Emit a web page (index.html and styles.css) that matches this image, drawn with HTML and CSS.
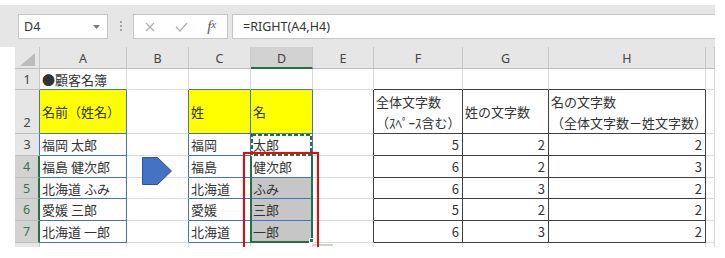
FILE: index.html
```html
<!DOCTYPE html>
<html lang="ja">
<head>
    <meta charset="UTF-8">
    <meta name="viewport" content="width=device-width, initial-scale=1.0">
    <title>顧客名簿</title>
    <link rel="stylesheet" href="styles.css">
</head>
<body>

    <!-- Formula bar -->
    <div class="toolbar">
        <div class="name-box">
            <span>D4</span>
            <svg class="drop" width="7" height="4" viewBox="0 0 7 4"><path d="M0 0h7L3.5 4z"/></svg>
        </div>
        <div class="grip"><i></i><i></i><i></i></div>
        <div class="fx-box">
            <span class="slot">
                <svg width="10" height="10" viewBox="0 0 10 10"><path d="M1 1l8 8M9 1l-8 8"/></svg>
            </span>
            <span class="slot">
                <svg width="13" height="10" viewBox="0 0 13 10"><path d="M1 5l4 4 7-8"/></svg>
            </span>
            <span class="slot fx">f<small>x</small></span>
        </div>
        <div class="formula">=RIGHT(A4,H4)</div>
    </div>

    <!-- Sheet -->
    <div class="sheet">
        <!-- header row -->
        <div class="corner">
            <svg width="15" height="13" viewBox="0 0 15 13"><path d="M15 0v13H0z"/></svg>
        </div>
        <div class="ch">A</div>
        <div class="ch">B</div>
        <div class="ch">C</div>
        <div class="ch on">D</div>
        <div class="ch">E</div>
        <div class="ch">F</div>
        <div class="ch">G</div>
        <div class="ch">H</div>
        <div class="ch"></div>

        <!-- row 1 -->
        <div class="rh">1</div>
        <div class="c bb">●顧客名簿</div>
        <div class="c"></div>
        <div class="c bb"></div>
        <div class="c bb"></div>
        <div class="c"></div>
        <div class="c kb"></div>
        <div class="c kb"></div>
        <div class="c kb"></div>
        <div class="c"></div>

        <!-- row 2 -->
        <div class="rh low br">2</div>
        <div class="c bx y">名前（姓名）</div>
        <div class="c br"></div>
        <div class="c bx y">姓</div>
        <div class="c bx y">名</div>
        <div class="c kr"></div>
        <div class="c kx"><span>全体文字数<br>（ｽﾍﾟｰｽ含む）</span></div>
        <div class="c kx">姓の文字数</div>
        <div class="c kx"><span>名の文字数<br>（全体文字数－姓文字数）</span></div>
        <div class="c"></div>

        <!-- row 3 -->
        <div class="rh br">3</div>
        <div class="c bx">福岡 太郎</div>
        <div class="c br"></div>
        <div class="c bx">福岡</div>
        <div class="c bx">太郎</div>
        <div class="c kr"></div>
        <div class="c kx num">5</div>
        <div class="c kx num">2</div>
        <div class="c kx num">2</div>
        <div class="c"></div>

        <!-- row 4 -->
        <div class="rh on">4</div>
        <div class="c bx">福島 健次郎</div>
        <div class="c br"></div>
        <div class="c bx">福島</div>
        <div class="c bx">健次郎</div>
        <div class="c kr"></div>
        <div class="c kx num">6</div>
        <div class="c kx num">2</div>
        <div class="c kx num">3</div>
        <div class="c"></div>

        <!-- row 5 -->
        <div class="rh on">5</div>
        <div class="c bx">北海道 ふみ</div>
        <div class="c br"></div>
        <div class="c bx">北海道</div>
        <div class="c bx shade">ふみ</div>
        <div class="c kr"></div>
        <div class="c kx num">6</div>
        <div class="c kx num">3</div>
        <div class="c kx num">2</div>
        <div class="c"></div>

        <!-- row 6 -->
        <div class="rh on">6</div>
        <div class="c bx">愛媛 三郎</div>
        <div class="c br"></div>
        <div class="c bx">愛媛</div>
        <div class="c bx shade">三郎</div>
        <div class="c kr"></div>
        <div class="c kx num">5</div>
        <div class="c kx num">2</div>
        <div class="c kx num">2</div>
        <div class="c"></div>

        <!-- row 7 -->
        <div class="rh on">7</div>
        <div class="c bx">北海道 一郎</div>
        <div class="c br"></div>
        <div class="c bx">北海道</div>
        <div class="c bx shade">一郎</div>
        <div class="c kr"></div>
        <div class="c kx num">6</div>
        <div class="c kx num">3</div>
        <div class="c kx num">2</div>
        <div class="c"></div>

        <!-- row 8 (cut off) -->
        <div class="rh cut"></div>
        <div class="c cut"></div>
        <div class="c cut"></div>
        <div class="c cut"></div>
        <div class="c cut"></div>
        <div class="c cut"></div>
        <div class="c cut"></div>
        <div class="c cut"></div>
        <div class="c cut"></div>
        <div class="c cut"></div>

        <!-- things drawn over the cells -->
        <svg class="arrow" width="31" height="29" viewBox="0 0 31 29">
            <path d="M0.5 0.5H15.5L29.5 14L15.5 27.5H0.5z"/>
        </svg>
        <div class="selection"></div>
        <svg class="marquee" width="61" height="22" viewBox="0 0 61 22">
            <rect class="m-back" x="1" y="1" width="59" height="20"/>
            <rect class="m-dash" x="1" y="1" width="59" height="20"/>
        </svg>
        <div class="handle"></div>
        <div class="paste-line"></div>
        <div class="red-box"></div>
    </div>

</body>
</html>
```

FILE: styles.css
```css
body {
    margin: 0;
    padding-top: 5px;
    background: #fff;
    font-family: "Noto Sans CJK JP", "Noto Sans", sans-serif;
    color: #333;
}
/* Formula bar */
.toolbar {
    width: 715px;
    height: 42px;
    box-sizing: border-box;
    padding: 9px 0 0 18px;
    background: #e6e6e6;
    display: flex;
    align-items: flex-start;
}
.name-box {
    width: 90px;
    height: 25px;
    box-sizing: border-box;
    border: 1px solid #c6c6c6;
    background: #fff;
    display: flex;
    align-items: center;
    justify-content: space-between;
    padding: 0 7px 0 5px;
    font-family: "Noto Sans", sans-serif;
    font-size: 12.5px;
    color: #333;
}
.drop {
    fill: #777;
}
.grip {
    width: 25px;
    padding-top: 7px;
    display: flex;
    flex-direction: column;
    align-items: center;
    gap: 2px;
}
.grip i {
    width: 2px;
    height: 2px;
    background: #a6a6a6;
}
.fx-box {
    width: 95px;
    height: 25px;
    box-sizing: border-box;
    border: 1px solid #c6c6c6;
    background: #fff;
    padding-left: 1px;
    display: flex;
    align-items: center;
}
.slot {
    width: 31px;
    display: flex;
    justify-content: center;
}
.slot svg path {
    fill: none;
    stroke: #b0b0b0;
    stroke-width: 1.3;
}
.fx {
    font-family: "Liberation Serif", serif;
    font-style: italic;
    font-size: 15px;
    color: #555;
    line-height: 1;
}
.fx small {
    font-size: 11px;
}
.formula {
    flex: 1;
    height: 25px;
    margin-left: 4px;
    box-sizing: border-box;
    border: 1px solid #c6c6c6;
    border-right: none;
    background: #fff;
    padding-left: 10px;
    font-family: "Noto Sans", sans-serif;
    font-size: 12.5px;
    line-height: 23px;
    color: #333;
}
/* Sheet grid */
.sheet {
    position: relative;
    margin-left: 15px;
    width: 700px;
    display: grid;
    grid-template-columns: 25px 87px 62px 62px 62px 61px 89px 86px 157px 9px;
    grid-template-rows: 22px 21px 44px 22px 22px 21px 22px 22px 4px;
}
.sheet > div {
    box-sizing: border-box;
    white-space: nowrap;
}
.corner, .ch, .rh {
    background: #e6e6e6;
    border-right: 1px solid #c8c8c8;
    border-bottom: 1px solid #bdbdbd;
    font-family: "Noto Sans", sans-serif;
    font-size: 12.5px;
    color: #444;
    display: flex;
    align-items: center;
    justify-content: center;
}
.corner {
    align-items: flex-end;
    justify-content: flex-end;
    padding: 0 4px 2px 0;
}
.corner svg {
    fill: #bcbcbc;
}
.ch {
    padding-top: 2px;
}
.ch.on {
    background: #d2d2d2;
    border-bottom: 2px solid #217346;
}
.rh.low {
    align-items: flex-end;
    padding-bottom: 2px;
}
.rh.on {
    background: #d2d2d2;
    color: #3b7150;
    border-right: 2px solid #217346;
}
.c {
    border-right: 1px solid #dadada;
    border-bottom: 1px solid #dadada;
    padding: 0 3px 0 2px;
    font-size: 13px;
    line-height: 21px;
    display: flex;
    align-items: center;
}
.cut {
    border-bottom: none;
}
.num {
    justify-content: flex-end;
}
.y {
    background: #ffff00;
}
.shade {
    background: #c6c6c6;
}
/* blue table borders */
.bx {
    border-right-color: #4472c4;
    border-bottom-color: #4472c4;
}
.rh.br, .br {
    border-right-color: #4472c4;
}
.bb {
    border-bottom-color: #4472c4;
}
/* dark table borders */
.kx {
    border-right-color: #3f3f3f;
    border-bottom-color: #3f3f3f;
}
.kr {
    border-right-color: #3f3f3f;
}
.kb {
    border-bottom-color: #3f3f3f;
}
/* Overlays */
.arrow {
    position: absolute;
    left: 127px;
    top: 110px;
}
.arrow path {
    fill: #4472c4;
    stroke: #2f528f;
    stroke-width: 1;
}
.selection {
    position: absolute;
    left: 235px;
    top: 109px;
    width: 63px;
    height: 87px;
    box-sizing: border-box;
    border: 2px solid #217346;
    border-top: none;
}
.marquee {
    position: absolute;
    left: 236px;
    top: 87px;
}
.marquee rect {
    fill: none;
    stroke-width: 2;
}
.m-back {
    stroke: #fff;
}
.m-dash {
    stroke: #217346;
    stroke-dasharray: 4 2;
}
.handle {
    position: absolute;
    left: 294px;
    top: 191px;
    width: 5px;
    height: 5px;
    background: #217346;
    border: 1px solid #fff;
}
.paste-line {
    position: absolute;
    left: 298px;
    top: 197px;
    width: 20px;
    height: 2px;
    background: #c3dbc9;
}
.red-box {
    position: absolute;
    left: 228px;
    top: 105px;
    width: 76px;
    height: 97px;
    box-sizing: border-box;
    border: 2px solid #ff0000;
}
```
